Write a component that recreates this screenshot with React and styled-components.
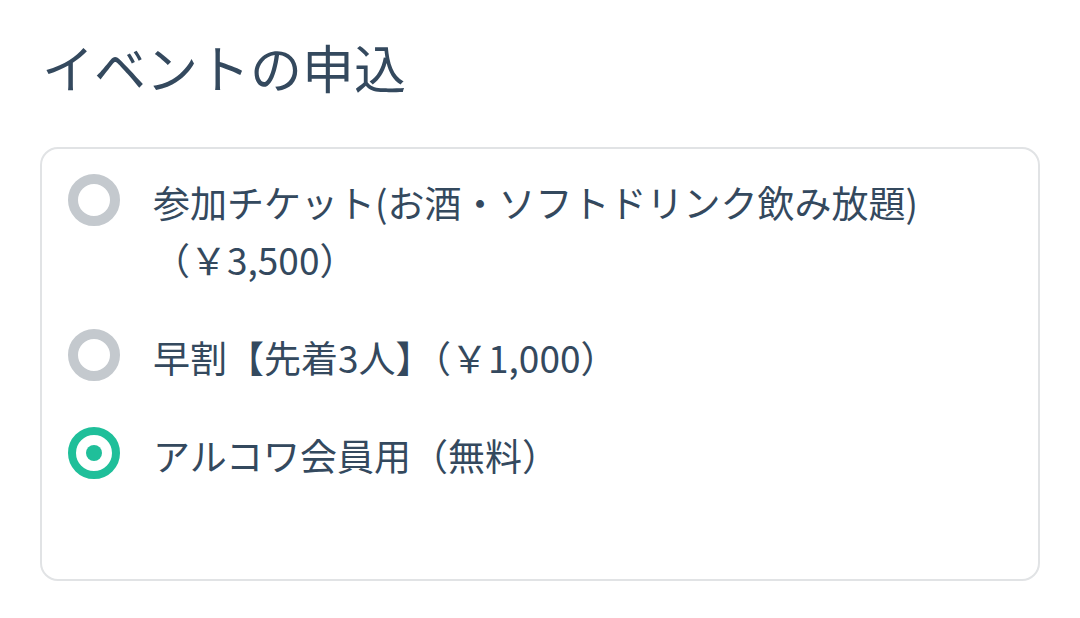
import React from 'react';
import styled, {createGlobalStyle} from 'styled-components';

const GlobalStyle = createGlobalStyle`
  body {
    margin: 0;
    background: #ffffff;
    font-family: "Noto Sans CJK JP", "Noto Sans", sans-serif;
    color: #34495e;
  }
`;

const Page = styled.div`
  padding: 41px 40px 0 40px;
`;

const Title = styled.h2`
  font-size: 52px;
  line-height: 52px;
  font-weight: 400;
  margin: 0 0 54px 2px;
  color: #34495e;
`;

const Card = styled.div`
  border: 2px solid #e1e3e5;
  border-radius: 18px;
  padding: 25px 24px 95px 26px;
  display: flex;
  flex-direction: column;
  gap: 41px;
`;

const Option = styled.label`
  display: flex;
  align-items: flex-start;
  gap: 33px;
  cursor: pointer;
`;

const Radio = styled.span`
  flex: none;
  box-sizing: border-box;
  width: 52px;
  height: 52px;
  border-radius: 50%;
  border: ${props => (props.checked ? '8px solid #1fbf9a' : '10px solid #c4c9ce')};
  display: flex;
  align-items: center;
  justify-content: center;

  &::after {
    content: '';
    display: ${props => (props.checked ? 'block' : 'none')};
    width: 16px;
    height: 16px;
    border-radius: 50%;
    background: #1fbf9a;
  }
`;

const Label = styled.span`
  font-size: 37px;
  line-height: 57px;
  margin-top: 0;
  color: #34495e;
`;

const options = [
  {lines: ['参加チケット(お酒・ソフトドリンク飲み放題)', '（￥3,500）'], checked: false},
  {lines: ['早割【先着3人】（￥1,000）'], checked: false},
  {lines: ['アルコワ会員用（無料）'], checked: true},
];

function App() {
  return (
    <Page>
      <GlobalStyle />
      <Title>イベントの申込</Title>
      <Card>
        {options.map(({lines, checked}, id) => (
          <Option key={id}>
            <Radio checked={checked} />
            <Label>
              {lines.map((line, i) => (
                <React.Fragment key={i}>
                  {i > 0 && <br />}
                  {line}
                </React.Fragment>
              ))}
            </Label>
          </Option>
        ))}
      </Card>
    </Page>
  );
}

export default App;
